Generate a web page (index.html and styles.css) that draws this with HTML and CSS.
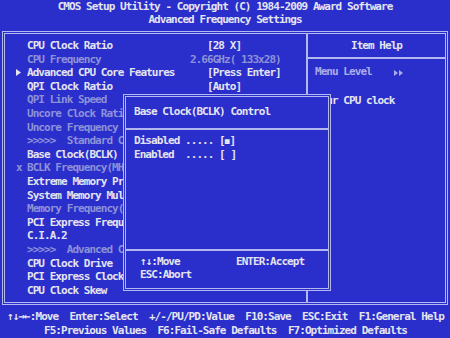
FILE: index.html
```html
<!DOCTYPE html>
<html lang="en">
<head>
  <meta charset="UTF-8">
  <meta name="viewport" content="width=device-width, initial-scale=1.0">
  <title>CMOS Setup Utility</title>
  <link rel="stylesheet" href="styles.css">
</head>
<body>
  <div class="screen">
    <div class="header">
      <div>CMOS Setup Utility - Copyright (C) 1984-2009 Award Software</div>
      <div>Advanced Frequency Settings</div>
    </div>

    <div class="frame">
      <div class="items">
        <div class="row"><span class="mark"></span><span>CPU Clock Ratio</span><span>   [28 X]</span></div>
        <div class="row dim"><span class="mark"></span><span>CPU Frequency</span><span>2.66GHz( 133x28)</span></div>
        <div class="row"><span class="mark"><svg class="tri" width="5" height="7" viewBox="0 0 5 7"><path d="M0 0 L5 3.5 L0 7 Z" fill="#e4e4f0"/></svg></span><span>Advanced CPU Core Features</span><span>   [Press Enter]</span></div>
        <div class="row"><span class="mark"></span><span>QPI Clock Ratio</span><span>   [Auto]</span></div>
        <div class="row dim"><span class="mark"></span><span>QPI Link Speed</span><span></span></div>
        <div class="row dim"><span class="mark"></span><span>Uncore Clock Ratio</span><span></span></div>
        <div class="row dim"><span class="mark"></span><span>Uncore Frequency</span><span></span></div>
        <div class="row dim"><span class="mark"></span><span>&gt;&gt;&gt;&gt;&gt;  Standard Clock Control</span><span></span></div>
        <div class="row"><span class="mark"></span><span>Base Clock(BCLK) Control</span><span></span></div>
        <div class="row dim"><span class="mark">x</span><span>BCLK Frequency(MHz)</span><span></span></div>
        <div class="row"><span class="mark"></span><span>Extreme Memory Profile</span><span></span></div>
        <div class="row"><span class="mark"></span><span>System Memory Multiplier</span><span></span></div>
        <div class="row dim"><span class="mark"></span><span>Memory Frequency(MHz)</span><span></span></div>
        <div class="row"><span class="mark"></span><span>PCI Express Frequency</span><span></span></div>
        <div class="row"><span class="mark"></span><span>C.I.A.2</span><span></span></div>
        <div class="row dim"><span class="mark"></span><span>&gt;&gt;&gt;&gt;&gt;  Advanced Clock Control</span><span></span></div>
        <div class="row"><span class="mark"></span><span>CPU Clock Drive</span><span></span></div>
        <div class="row"><span class="mark"></span><span>PCI Express Clock Drive</span><span></span></div>
        <div class="row"><span class="mark"></span><span>CPU Clock Skew</span><span></span></div>
      </div>
      <div class="help">
        <div class="help-title">Item Help</div>
        <div class="help-body">
          <div class="dim level">Menu Level    <svg class="arrows" width="9" height="6" viewBox="0 0 9 6"><path d="M0 0 L4 3 L0 6 Z M5 0 L9 3 L5 6 Z" fill="#a9adea"/></svg></div>
          <div class="help-text">Your CPU clock</div>
        </div>
      </div>
    </div>

    <div class="footer">
      <div>&#8593;&#8595;&#8594;&#8592;:Move  Enter:Select  +/-/PU/PD:Value  F10:Save  ESC:Exit  F1:General Help</div>
      <div>F5:Previous Values  F6:Fail-Safe Defaults  F7:Optimized Defaults</div>
    </div>

    <div class="dialog">
      <div class="dialog-title">Base Clock(BCLK) Control</div>
      <div class="dialog-options">
        <div>Disabled ..... [<span class="box">&#9632;</span>]</div>
        <div>Enabled  ..... [ ]</div>
      </div>
      <div class="dialog-keys">
        <div class="key-row"><span>&#8593;&#8595;:Move</span><span>ENTER:Accept</span></div>
        <div>ESC:Abort</div>
      </div>
    </div>
  </div>
</body>
</html>
```

FILE: styles.css
```css
body {
  margin: 0;
  background-color: #2a2ecb;
}
.screen {
  position: relative;
  width: 450px;
  height: 338px;
  overflow: hidden;
  background-color: #2a2ecb;
  color: #e4e4f0;
  font-family: "DejaVu Sans Mono", "Liberation Mono", monospace;
  font-weight: bold;
  font-size: 11px;
  letter-spacing: -0.95px;
}
.header div,
.footer div,
.help-body div,
.dialog-title,
.dialog-options div,
.dialog-keys div,
.row span {
  white-space: pre;
}
.dim {
  color: #8d92d8;
}
.header {
  text-align: center;
  line-height: 13px;
}
.frame {
  margin: 5px 0 0 2px;
  width: 440px;
  height: 268px;
  border: 3px double #b4b8f0;
  display: flex;
}
.items {
  width: 301px;
  padding-top: 5px;
  border-right: 2px solid #b4b8f0;
}
.row {
  display: grid;
  grid-template-columns: 11px 163px 1fr;
  padding-left: 11px;
  height: 13.6px;
  line-height: 13.6px;
  overflow: hidden;
}
.mark {
  display: flex;
  align-items: center;
}
.help {
  flex: 1;
  display: flex;
  flex-direction: column;
}
.help-title {
  height: 23px;
  line-height: 24px;
  text-align: center;
  border-bottom: 2px solid #b4b8f0;
}
.help-body {
  padding: 6px 0 0 7px;
  line-height: 13.6px;
}
.help-text {
  margin-top: 15px;
}
.level {
  color: #a9adea;
}
.arrows {
  vertical-align: -0.5px;
}
.footer {
  padding-top: 5px;
  padding-left: 1px;
  line-height: 13.6px;
  text-align: center;
}
.dialog {
  position: absolute;
  z-index: 2;
  left: 123px;
  top: 94px;
  width: 202px;
  height: 191px;
  border: 3px double #b4b8f0;
  background-color: #2a2ecb;
  display: flex;
  flex-direction: column;
  line-height: 13.6px;
}
.dialog-title {
  padding: 8px 0 9px 8px;
  border-bottom: 2px solid #b4b8f0;
}
.dialog-options {
  flex: 1;
  padding: 4px 0 0 8px;
}
.box {
  font-size: 8px;
  letter-spacing: 0;
}
.dialog-keys {
  border-top: 2px solid #b4b8f0;
  padding: 4px 0 6px 14px;
}
.key-row {
  display: flex;
}
.key-row span:first-child {
  width: 96px;
}
```
